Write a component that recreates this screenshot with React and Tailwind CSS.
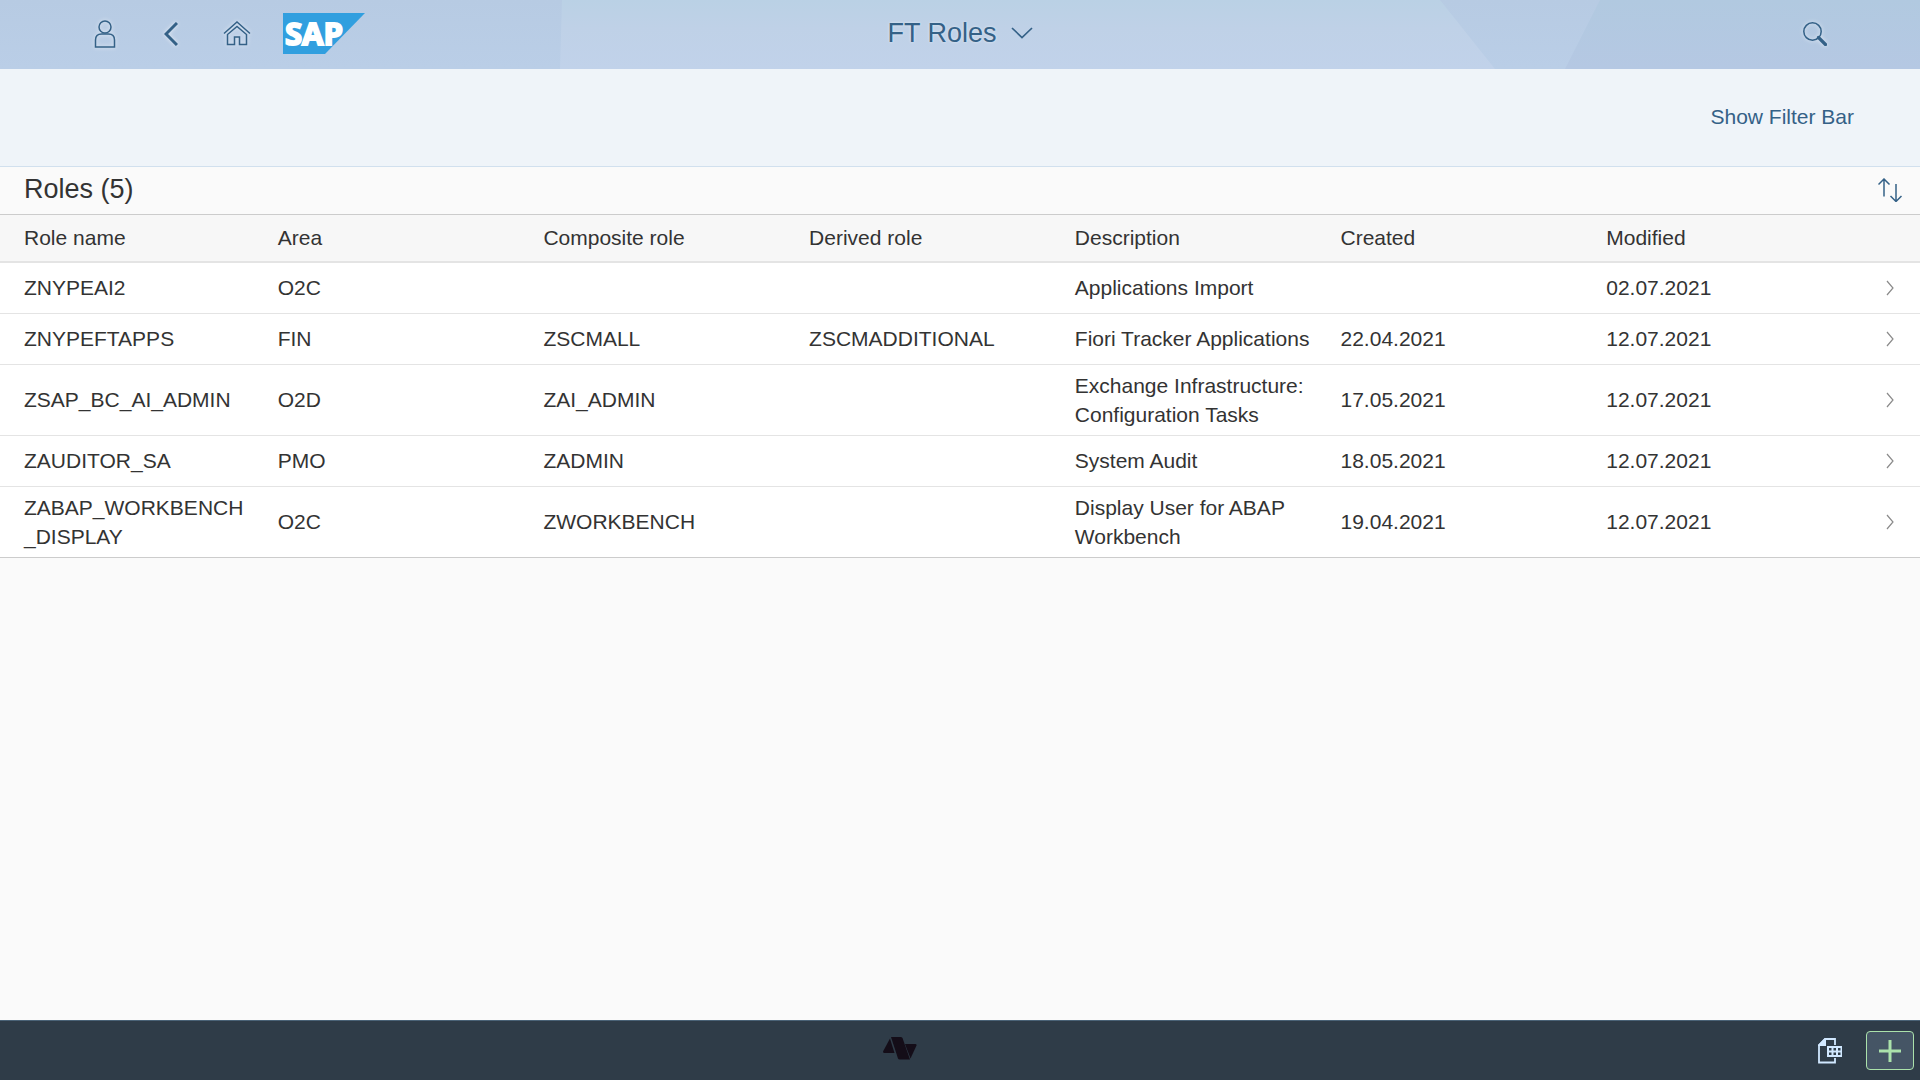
import React from "react";

const roles = [
  { name: "ZNYPEAI2", area: "O2C", composite: "", derived: "", description: "Applications Import", created: "", modified: "02.07.2021" },
  { name: "ZNYPEFTAPPS", area: "FIN", composite: "ZSCMALL", derived: "ZSCMADDITIONAL", description: "Fiori Tracker Applications", created: "22.04.2021", modified: "12.07.2021" },
  { name: "ZSAP_BC_AI_ADMIN", area: "O2D", composite: "ZAI_ADMIN", derived: "", description: "Exchange Infrastructure: Configuration Tasks", created: "17.05.2021", modified: "12.07.2021" },
  { name: "ZAUDITOR_SA", area: "PMO", composite: "ZADMIN", derived: "", description: "System Audit", created: "18.05.2021", modified: "12.07.2021" },
  { name: "ZABAP_WORKBENCH_DISPLAY", area: "O2C", composite: "ZWORKBENCH", derived: "", description: "Display User for ABAP Workbench", created: "19.04.2021", modified: "12.07.2021" },
];

const columns = [
  ["name", "Role name"],
  ["area", "Area"],
  ["composite", "Composite role"],
  ["derived", "Derived role"],
  ["description", "Description"],
  ["created", "Created"],
  ["modified", "Modified"],
];

const glow = "drop-shadow-[0_0_2px_rgba(255,255,255,0.7)]";

function ShellButton({ label, children }) {
  return (
    <button type="button" aria-label={label} className="flex h-full w-[66px] items-center justify-center">
      {children}
    </button>
  );
}

function Backdrop() {
  return (
    <svg className="absolute inset-0 h-full w-full" viewBox="0 0 1920 69" preserveAspectRatio="none" aria-hidden="true">
      <defs>
        <linearGradient id="side" x1="0" y1="0" x2="0" y2="1">
          <stop offset="0" stopColor="#b7cbe3" />
          <stop offset="1" stopColor="#bacee7" />
        </linearGradient>
        <linearGradient id="middle" x1="0" y1="0" x2="0" y2="1">
          <stop offset="0" stopColor="#bad1e5" />
          <stop offset="0.4" stopColor="#bfd1e7" />
          <stop offset="1" stopColor="#c1d2ea" />
        </linearGradient>
        <linearGradient id="right" x1="0" y1="0" x2="0" y2="1">
          <stop offset="0" stopColor="#b1c9e0" />
          <stop offset="1" stopColor="#b5c8e3" />
        </linearGradient>
      </defs>
      <rect width="1920" height="69" fill="url(#side)" />
      <path d="M562 0H1440L1495 69H560Z" fill="url(#middle)" />
      <path d="M1600 0H1920V69H1565Z" fill="url(#right)" />
    </svg>
  );
}

function SapLogo() {
  return (
    <svg width="82" height="41" viewBox="0 0 82 41" role="img" aria-label="SAP">
      <path d="M0 0H82L42 41H0Z" fill="#319fdf" />
      <text x="2" y="32" fontFamily="'Open Sans', 'Liberation Sans', sans-serif" fontWeight="700" fontSize="31" fill="#fff" stroke="#fff" strokeWidth="2">
        SAP
      </text>
    </svg>
  );
}

function Header() {
  return (
    <header className="relative h-[69px] shrink-0">
      <Backdrop />
      <div className="relative grid h-full grid-cols-3 items-center px-[72px] text-[#346187]">
        <div className="flex h-full items-center pb-0.5">
          <ShellButton label="User">
            <svg width="22" height="28" viewBox="0 0 22 28" fill="none" stroke="currentColor" strokeWidth="1.5" className={glow}>
              <circle cx="11" cy="7" r="6" />
              <path d="M1.5 27V20Q1.5 14 7.500 14H14.500Q20.500 14 20.500 20V27Z" />
            </svg>
          </ShellButton>
          <ShellButton label="Back">
            <svg width="14" height="24" viewBox="0 0 14 24" fill="none" stroke="currentColor" strokeWidth="3" className={glow}>
              <path d="M13 1L2 12L13 23" />
            </svg>
          </ShellButton>
          <ShellButton label="Home">
            <svg width="28" height="25" viewBox="0 0 28 25" fill="none" stroke="currentColor" strokeWidth="1.5" className={glow}>
              <path d="M1 12.500L14 1L27 12.500" />
              <path d="M4.500 13.500V23.500H11.500V16H16.500V23.500H23.500V13.500L14 5.500Z" />
            </svg>
          </ShellButton>
          <a href="#home" className="ml-[13px] block">
            <SapLogo />
          </a>
        </div>
        <h1 className="flex justify-center pb-1 text-[27px] leading-8">
          <button type="button" className="flex items-center gap-3.5 whitespace-nowrap [text-shadow:0_0_3px_rgba(255,255,255,0.6)]">
            FT Roles
            <svg width="22" height="12" viewBox="0 0 22 12" fill="none" stroke="currentColor" strokeWidth="1.7" aria-hidden="true">
              <path d="M1 1L11 10.500L21 1" />
            </svg>
          </button>
        </h1>
        <div className="flex h-full justify-end pb-0.5">
          <ShellButton label="Search">
            <svg width="24" height="24" viewBox="0 0 24 24" fill="none" stroke="currentColor" className={glow}>
              <circle cx="9.500" cy="9.500" r="8.700" strokeWidth="1.500" />
              <path d="M15.500 15.500L22.500 22.500" strokeWidth="3.200" strokeLinecap="round" />
            </svg>
          </ShellButton>
        </div>
      </div>
    </header>
  );
}

function RolesTable() {
  return (
    <table className="w-full table-fixed border-collapse text-left">
      <thead>
        <tr className="h-[47px] border-b-2 border-[#e4e4e4] bg-[#f7f7f7]">
          {columns.map(([key, label]) => (
            <th key={key} scope="col" className="px-3 pb-0.5 font-normal first:pl-6">
              {label}
            </th>
          ))}
          <th className="w-[60px]" aria-label="Open" />
        </tr>
      </thead>
      <tbody className="bg-white">
        {roles.map((role) => (
          <tr key={role.name} className="h-[51px] border-b border-[#e4e4e4] last:border-[#cccccc]">
            {columns.map(([key]) => (
              <td key={key} className="px-3 py-1.5 align-middle wrap-anywhere first:pl-6">
                {role[key]}
              </td>
            ))}
            <td>
              <button type="button" aria-label={"Open " + role.name} className="flex w-full justify-center">
                <svg width="8" height="16" viewBox="0 0 8 16" fill="none" stroke="#8a8a8a" strokeWidth="1.200">
                  <path d="M1 1L7 8L1 15" />
                </svg>
              </button>
            </td>
          </tr>
        ))}
      </tbody>
    </table>
  );
}

function Footer() {
  return (
    <footer className="grid h-[60px] shrink-0 grid-cols-[1fr_auto_1fr] items-center border-t border-[#4a6276] bg-[#2f3c48] pr-1.5">
      <span />
      <svg width="34" height="23" viewBox="0 0 34 23" fill="#140d18" aria-hidden="true" className="mr-[114px] mb-1">
        <path d="M7 1.500L0 14.500Q0 16 1.500 16H11.500Z" />
        <path d="M8 0H17.500Q19 0 19.500 1L27 22.500H16.500Q15.500 22.500 15 21.500Z" />
        <path d="M22 7H32.500Q34 7 33.500 8.500L27.500 21.500Z" />
      </svg>
      <div className="flex items-center justify-end gap-6">
        <button type="button" aria-label="Export to spreadsheet">
          <svg width="24" height="26" viewBox="0 0 24 26" fill="none">
            <path d="M17 7V1H7L1 7V24.500H17V20" stroke="#d1e8ff" strokeWidth="1.800" />
            <path d="M7 0H8V8H0V7Z" fill="#d1e8ff" />
            <path d="M9 8H24V19H9Z" fill="#d1e8ff" />
            <path d="M11 10h2.500v2.500h-2.500zM15.500 10h2.500v2.500h-2.500zM20 10h2.500v2.500h-2.500zM11 14.500h2.500v2.500h-2.500zM15.500 14.500h2.500v2.500h-2.500zM20 14.500h2.500v2.500h-2.500z" fill="#2f3c48" />
          </svg>
        </button>
        <button type="button" aria-label="Add" className="flex h-[39px] w-12 items-center justify-center rounded border border-[#abe2ab] bg-[#455565]">
          <svg width="22" height="22" viewBox="0 0 22 22" stroke="#abe2ab" strokeWidth="3">
            <path d="M11 0V22M0 11H22" />
          </svg>
        </button>
      </div>
    </footer>
  );
}

export default function App() {
  return (
    <div className="flex min-h-screen flex-col bg-[#fafafa] font-['Liberation_Sans',Arial,sans-serif] text-[21px] leading-[29px] text-[#333333]">
      <Header />
      <div className="flex h-[98px] shrink-0 items-center justify-end border-b border-[#d1e0ee] bg-[#eff4f9] pr-[66px] pb-0.5">
        <button type="button" className="text-[#346187]">Show Filter Bar</button>
      </div>
      <main className="flex-1">
        <div className="flex h-12 items-center justify-between border-b border-[#cccccc] pr-[18px] pb-0.5 pl-6">
          <h2 className="pb-0.5 text-[27px] leading-8">Roles (5)</h2>
          <button type="button" aria-label="Sort">
            <svg width="24" height="24" viewBox="0 0 24 24" fill="none" stroke="#346187" strokeWidth="1.500">
              <path d="M6 18.500V1M0.500 6.500L6 1L11.500 6.500M18 6V23.500M12.500 18L18 23.500L23.500 18" />
            </svg>
          </button>
        </div>
        <RolesTable />
      </main>
      <Footer />
    </div>
  );
}
